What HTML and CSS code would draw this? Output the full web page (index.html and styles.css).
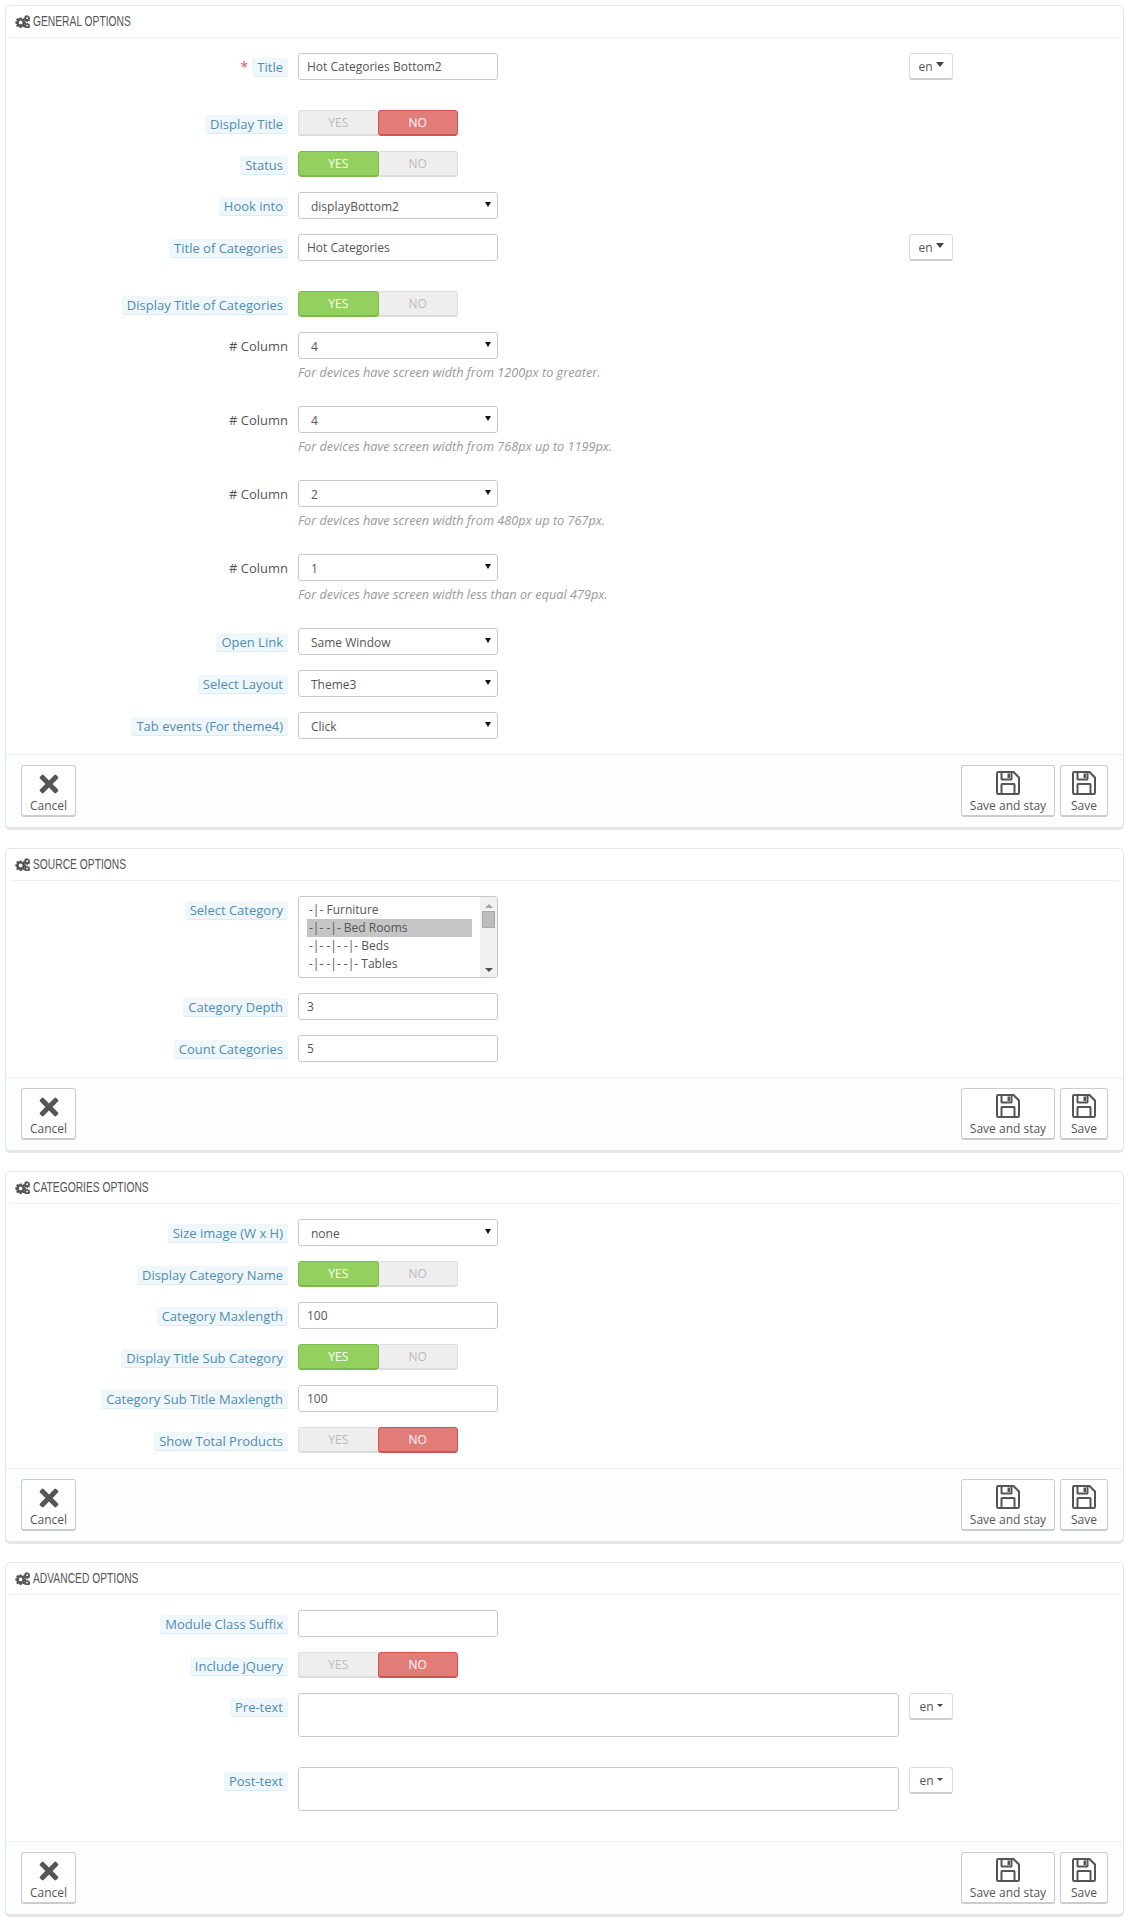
FILE: index.html
```html
<!DOCTYPE html>
<html lang="en">
<head>
<meta charset="utf-8">
<title>Hot Categories</title>
<link rel="stylesheet" href="styles.css">
</head>
<body>
<svg class="defs" width="0" height="0" aria-hidden="true">
  <defs>
    <symbol id="cogs" viewBox="0 0 16 14">
      <path fill-rule="evenodd" d="M5 2.6h2l.3 1.3.9.4 1.2-.7 1.4 1.4-.7 1.2.4.9 1.3.3v2l-1.3.3-.4.9.7 1.2-1.4 1.4-1.2-.7-.9.4-.3 1.3H5l-.3-1.3-.9-.4-1.2.7-1.4-1.4.7-1.2-.4-.9L.2 9V7l1.3-.3.4-.9-.7-1.2 1.4-1.4 1.2.7.9-.4zM6 6a2 2 0 1 0 0 4 2 2 0 0 0 0-4z"/>
      <path fill-rule="evenodd" d="M12.4.4h1.2l.2.8.6.3.7-.4.8.8-.4.7.3.6.8.2v1.2l-.8.2-.3.6.4.7-.8.8-.7-.4-.6.3-.2.8h-1.200l-.2-.8-.6-.3-.7.4-.8-.8.4-.7-.3-.6-.8-.2V2.800l.8-.2.3-.6-.4-.7.8-.8.7.4.6-.3zM13 2.400a1 1 0 1 0 0 2 1 1 0 0 0 0-2z"/>
      <path fill-rule="evenodd" d="M12.400 8.400h1.200l.2.8.6.3.7-.4.8.8-.4.7.3.6.8.2v1.200l-.8.2-.3.6.4.7-.8.8-.7-.4-.6.3-.2.8h-1.200l-.2-.8-.6-.3-.7.4-.8-.8.4-.7-.3-.6-.8-.2v-1.200l.8-.2.3-.6-.4-.7.8-.8.7.4.6-.3zM13 10.400a1 1 0 1 0 0 2 1 1 0 0 0 0-2z"/>
    </symbol>
    <symbol id="cross" viewBox="0 0 20 20">
      <path d="M4.600 1 10 6.400 15.400 1a1.300 1.300 0 0 1 1.800 0l1.800 1.800a1.300 1.300 0 0 1 0 1.800L13.600 10l5.400 5.400a1.300 1.300 0 0 1 0 1.800L17.200 19a1.300 1.300 0 0 1-1.800 0L10 13.600 4.600 19a1.300 1.300 0 0 1-1.800 0L1 17.200a1.300 1.300 0 0 1 0-1.800L6.400 10 1 4.600a1.300 1.300 0 0 1 0-1.800L2.800 1a1.300 1.300 0 0 1 1.800 0z"/>
    </symbol>
    <symbol id="floppy" viewBox="0 0 24 24">
      <path fill-rule="evenodd" d="M2.200 0H18l6 6v15.800a2.200 2.200 0 0 1-2.200 2.200H2.200A2.200 2.200 0 0 1 0 21.800V2.200A2.200 2.200 0 0 1 2.200 0zM2 2v20h2.500v-8.500a1.500 1.500 0 0 1 1.500-1.500h12a1.500 1.500 0 0 1 1.500 1.500V22H22V7l-5-5h-.500v6a1.500 1.500 0 0 1-1.500 1.500H6A1.500 1.500 0 0 1 4.500 8V2zM6.500 2v5.500h8V2zM6.500 14v8h11v-8z"/>
      <path d="M11.500 2.500h2.500v4.500h-2.500z"/>
    </symbol>
  </defs>
</svg>

<main class="page">

<section class="panel">
  <h3 class="panel-head"><svg class="ico-cogs"><use href="#cogs"/></svg><span class="head-text">GENERAL OPTIONS</span></h3>
  <div class="panel-body">
    <div class="row gap-lg">
      <div class="lbl"><span class="req">*</span><span class="tip">Title</span></div>
      <div class="ctrl"><input class="field" type="text" value="Hot Categories Bottom2"></div>
      <button class="lang" type="button">en<i class="caret big"></i></button>
    </div>
    <div class="row">
      <div class="lbl"><span class="tip">Display Title</span></div>
      <div class="ctrl"><div class="switch"><span class="seg">YES</span><span class="seg off">NO</span></div></div>
    </div>
    <div class="row">
      <div class="lbl"><span class="tip">Status</span></div>
      <div class="ctrl"><div class="switch"><span class="seg on">YES</span><span class="seg">NO</span></div></div>
    </div>
    <div class="row">
      <div class="lbl"><span class="tip">Hook into</span></div>
      <div class="ctrl"><div class="sel"><select><option>displayBottom2</option></select></div></div>
    </div>
    <div class="row gap-lg">
      <div class="lbl"><span class="tip">Title of Categories</span></div>
      <div class="ctrl"><input class="field" type="text" value="Hot Categories"></div>
      <button class="lang" type="button">en<i class="caret big"></i></button>
    </div>
    <div class="row">
      <div class="lbl"><span class="tip">Display Title of Categories</span></div>
      <div class="ctrl"><div class="switch"><span class="seg on">YES</span><span class="seg">NO</span></div></div>
    </div>
    <div class="row">
      <div class="lbl"><span class="plain"># Column</span></div>
      <div class="ctrl"><div class="sel"><select><option>4</option></select></div><p class="hint">For devices have screen width from 1200px to greater.</p></div>
    </div>
    <div class="row">
      <div class="lbl"><span class="plain"># Column</span></div>
      <div class="ctrl"><div class="sel"><select><option>4</option></select></div><p class="hint">For devices have screen width from 768px up to 1199px.</p></div>
    </div>
    <div class="row">
      <div class="lbl"><span class="plain"># Column</span></div>
      <div class="ctrl"><div class="sel"><select><option>2</option></select></div><p class="hint">For devices have screen width from 480px up to 767px.</p></div>
    </div>
    <div class="row">
      <div class="lbl"><span class="plain"># Column</span></div>
      <div class="ctrl"><div class="sel"><select><option>1</option></select></div><p class="hint">For devices have screen width less than or equal 479px.</p></div>
    </div>
    <div class="row">
      <div class="lbl"><span class="tip">Open Link</span></div>
      <div class="ctrl"><div class="sel"><select><option>Same Window</option></select></div></div>
    </div>
    <div class="row">
      <div class="lbl"><span class="tip">Select Layout</span></div>
      <div class="ctrl"><div class="sel"><select><option>Theme3</option></select></div></div>
    </div>
    <div class="row">
      <div class="lbl"><span class="tip">Tab events (For theme4)</span></div>
      <div class="ctrl"><div class="sel"><select><option>Click</option></select></div></div>
    </div>
  </div>
  <footer class="panel-foot">
    <button class="act" type="button"><svg class="ico-x"><use href="#cross"/></svg>Cancel</button>
    <div class="act-right">
      <button class="act wide" type="button"><svg class="ico-save"><use href="#floppy"/></svg>Save and stay</button>
      <button class="act" type="button"><svg class="ico-save"><use href="#floppy"/></svg>Save</button>
    </div>
  </footer>
</section>

<section class="panel">
  <h3 class="panel-head"><svg class="ico-cogs"><use href="#cogs"/></svg><span class="head-text">SOURCE OPTIONS</span></h3>
  <div class="panel-body">
    <div class="row">
      <div class="lbl"><span class="tip">Select Category</span></div>
      <div class="ctrl">
        <div class="listbox">
          <ul class="opts">
            <li>-|- Furniture</li>
            <li class="picked">-|- -|- Bed Rooms</li>
            <li>-|- -|- -|- Beds</li>
            <li>-|- -|- -|- Tables</li>
          </ul>
          <div class="track"><i class="arr up"></i><i class="thumb"></i><i class="arr down"></i></div>
        </div>
      </div>
    </div>
    <div class="row">
      <div class="lbl"><span class="tip">Category Depth</span></div>
      <div class="ctrl"><input class="field" type="text" value="3"></div>
    </div>
    <div class="row">
      <div class="lbl"><span class="tip">Count Categories</span></div>
      <div class="ctrl"><input class="field" type="text" value="5"></div>
    </div>
  </div>
  <footer class="panel-foot">
    <button class="act" type="button"><svg class="ico-x"><use href="#cross"/></svg>Cancel</button>
    <div class="act-right">
      <button class="act wide" type="button"><svg class="ico-save"><use href="#floppy"/></svg>Save and stay</button>
      <button class="act" type="button"><svg class="ico-save"><use href="#floppy"/></svg>Save</button>
    </div>
  </footer>
</section>

<section class="panel">
  <h3 class="panel-head"><svg class="ico-cogs"><use href="#cogs"/></svg><span class="head-text">CATEGORIES OPTIONS</span></h3>
  <div class="panel-body">
    <div class="row">
      <div class="lbl"><span class="tip">Size image (W x H)</span></div>
      <div class="ctrl"><div class="sel"><select><option>none</option></select></div></div>
    </div>
    <div class="row">
      <div class="lbl"><span class="tip">Display Category Name</span></div>
      <div class="ctrl"><div class="switch"><span class="seg on">YES</span><span class="seg">NO</span></div></div>
    </div>
    <div class="row">
      <div class="lbl"><span class="tip">Category Maxlength</span></div>
      <div class="ctrl"><input class="field" type="text" value="100"></div>
    </div>
    <div class="row">
      <div class="lbl"><span class="tip">Display Title Sub Category</span></div>
      <div class="ctrl"><div class="switch"><span class="seg on">YES</span><span class="seg">NO</span></div></div>
    </div>
    <div class="row">
      <div class="lbl"><span class="tip">Category Sub Title Maxlength</span></div>
      <div class="ctrl"><input class="field" type="text" value="100"></div>
    </div>
    <div class="row">
      <div class="lbl"><span class="tip">Show Total Products</span></div>
      <div class="ctrl"><div class="switch"><span class="seg">YES</span><span class="seg off">NO</span></div></div>
    </div>
  </div>
  <footer class="panel-foot">
    <button class="act" type="button"><svg class="ico-x"><use href="#cross"/></svg>Cancel</button>
    <div class="act-right">
      <button class="act wide" type="button"><svg class="ico-save"><use href="#floppy"/></svg>Save and stay</button>
      <button class="act" type="button"><svg class="ico-save"><use href="#floppy"/></svg>Save</button>
    </div>
  </footer>
</section>

<section class="panel">
  <h3 class="panel-head"><svg class="ico-cogs"><use href="#cogs"/></svg><span class="head-text">ADVANCED OPTIONS</span></h3>
  <div class="panel-body">
    <div class="row">
      <div class="lbl"><span class="tip">Module Class Suffix</span></div>
      <div class="ctrl"><input class="field" type="text"></div>
    </div>
    <div class="row">
      <div class="lbl"><span class="tip">Include jQuery</span></div>
      <div class="ctrl"><div class="switch"><span class="seg">YES</span><span class="seg off">NO</span></div></div>
    </div>
    <div class="row gap-lg">
      <div class="lbl"><span class="tip">Pre-text</span></div>
      <div class="ctrl"><textarea class="area"></textarea></div>
      <button class="lang" type="button">en<i class="caret"></i></button>
    </div>
    <div class="row gap-lg">
      <div class="lbl"><span class="tip">Post-text</span></div>
      <div class="ctrl"><textarea class="area"></textarea></div>
      <button class="lang" type="button">en<i class="caret"></i></button>
    </div>
  </div>
  <footer class="panel-foot">
    <button class="act" type="button"><svg class="ico-x"><use href="#cross"/></svg>Cancel</button>
    <div class="act-right">
      <button class="act wide" type="button"><svg class="ico-save"><use href="#floppy"/></svg>Save and stay</button>
      <button class="act" type="button"><svg class="ico-save"><use href="#floppy"/></svg>Save</button>
    </div>
  </footer>
</section>

</main>
</body>
</html>
```

FILE: styles.css
```css
* { box-sizing: border-box; }

html, body { margin: 0; padding: 0; background: #fff; }

body {
  font-family: "Open Sans", "Liberation Sans", sans-serif;
  font-size: 13px;
  line-height: 18px;
  color: #555;
}

.defs { display: block; height: 0; }

.page {
  display: flex;
  flex-direction: column;
  gap: 20px;
  padding: 5px 4px 4px 5px;
}

.panel {
  background: #fff;
  border: 1px solid #e6e6e6;
  border-radius: 5px;
  box-shadow: 0 2px 0 rgba(0, 0, 0, .1);
  overflow: hidden;
}

.panel-head {
  display: flex;
  align-items: center;
  gap: 3px;
  height: 32px;
  margin: 0 4px;
  padding: 0 5px 1px;
  border-bottom: 1px solid #eee;
  font-family: "Liberation Sans", sans-serif;
  font-size: 15px;
  font-weight: 400;
  color: #555;
}

.head-text {
  display: inline-block;
  white-space: nowrap;
  transform: scaleX(.685);
  transform-origin: left center;
}

.ico-cogs { width: 15px; height: 13px; fill: #555; flex: none; }

.panel-body { padding: 15px 0 0; }

.row {
  display: flex;
  align-items: flex-start;
  margin-bottom: 15px;
}

.row.gap-lg { margin-bottom: 30px; }

.lbl {
  flex: none;
  width: 282px;
  margin-right: 10px;
  padding-top: 5px;
  display: flex;
  justify-content: flex-end;
  align-items: flex-start;
}

.tip {
  display: block;
  height: 19px;
  padding: 0 5px;
  background: #eff7fb;
  border-bottom: 1px solid #dcecf5;
  border-radius: 3px;
  color: #4f8db3;
  white-space: nowrap;
}

.plain { display: block; color: #555; }

.req { margin-right: 4px; color: #e55; font-size: 14px; }

.ctrl { flex: none; width: 600px; margin-right: 11px; }

.field, .sel select {
  display: block;
  width: 200px;
  height: 27px;
  background: #fff;
  border: 1px solid #c8c8c8;
  border-radius: 3px;
  font-family: inherit;
  font-size: 12px;
  color: #555;
  outline: 0;
}

.field { padding: 0 8px; }

.area {
  display: block;
  width: 601px;
  height: 44px;
  resize: none;
  background: #fff;
  border: 1px solid #c8c8c8;
  border-radius: 3px;
  outline: 0;
}

.sel { position: relative; width: 200px; }

.sel select {
  appearance: none;
  -webkit-appearance: none;
  padding: 2px 20px 0 12px;
}

.sel::after {
  content: "";
  position: absolute;
  top: 10px;
  right: 7px;
  border-left: 3px solid transparent;
  border-right: 3px solid transparent;
  border-top: 5px solid #111;
  pointer-events: none;
}

.hint {
  margin: 0;
  height: 32px;
  padding-top: 4px;
  font-size: 12.7px;
  font-style: italic;
  color: #999;
}

.switch {
  display: flex;
  width: 160px;
  height: 26px;
  border-radius: 3px;
  overflow: hidden;
  font-size: 12px;
}

.seg {
  flex: 1;
  display: flex;
  align-items: center;
  justify-content: center;
  background: #eee;
  border-top: 1px solid #ddd;
  border-bottom: 2px solid #ddd;
  color: #bbb;
}

.seg:first-child { border-left: 1px solid #ddd; }
.seg:last-child { border-right: 1px solid #ddd; }

.seg.on {
  background: #93d05e;
  border: 1px solid #7cb84a;
  border-bottom-width: 2px;
  border-radius: 3px;
  color: #fff;
}

.seg.off {
  background: #e27c79;
  border: 1px solid #d2524f;
  border-bottom-width: 2px;
  border-radius: 3px;
  color: #fff;
}

.lang {
  flex: none;
  display: flex;
  align-items: center;
  justify-content: center;
  gap: 3px;
  width: 44px;
  height: 27px;
  padding: 0;
  background: #fff;
  border: 1px solid #ddd;
  border-bottom: 2px solid #ccc;
  border-radius: 3px;
  font-family: inherit;
  font-size: 12px;
  color: #555;
}

.caret {
  margin-bottom: 1px;
  border-left: 3px solid transparent;
  border-right: 3px solid transparent;
  border-top: 3px solid #444;
}

.caret.big {
  margin-bottom: 4px;
  border-left-width: 4.5px;
  border-right-width: 4.5px;
  border-top-width: 5px;
}

.listbox {
  display: flex;
  width: 200px;
  height: 82px;
  background: #fff;
  border: 1px solid #c8c8c8;
  border-radius: 3px;
  overflow: hidden;
}

.opts {
  flex: 1;
  margin: 0;
  padding: 4px 8px 0 8px;
  list-style: none;
  font-size: 12px;
}

.opts li { height: 18px; padding-left: 2px; line-height: 18px; white-space: nowrap; }

.opts .picked { background: #c5c5c5; }

.track {
  flex: none;
  width: 17px;
  display: flex;
  flex-direction: column;
  align-items: center;
  background: #f1f1f1;
  padding: 7px 0 5px;
}

.arr { border-left: 4px solid transparent; border-right: 4px solid transparent; }
.up { border-bottom: 4px solid #a3a3a3; }
.down { margin-top: auto; border-top: 4px solid #505050; }

.thumb {
  width: 13px;
  height: 17px;
  margin-top: 3px;
  background: #bdbdbd;
  border: 1px solid #aaa;
}

.panel-foot {
  display: flex;
  justify-content: space-between;
  padding: 10px 15px 10px;
  background: #fcfdfe;
  border-top: 1px solid #eee;
}

.act-right { display: flex; gap: 5px; }

.act {
  display: flex;
  flex-direction: column;
  align-items: center;
  width: 47px;
  height: 52px;
  padding: 5px 0 0;
  background: #fff;
  border: 1px solid #ccc;
  border-bottom: 2px solid #ccc;
  border-radius: 3px;
  font-family: inherit;
  font-size: 12px;
  line-height: 16px;
  color: #555;
}

.act:first-child { width: 55px; }
.act-right .act:first-child, .act.wide { width: 94px; }
.act-right .act:last-child { width: 48px; }

.ico-x { width: 20px; height: 20px; margin: 3px 0 4px; fill: #555; flex: none; }
.ico-save { width: 24px; height: 24px; margin-bottom: 3px; fill: #555; flex: none; }
```
